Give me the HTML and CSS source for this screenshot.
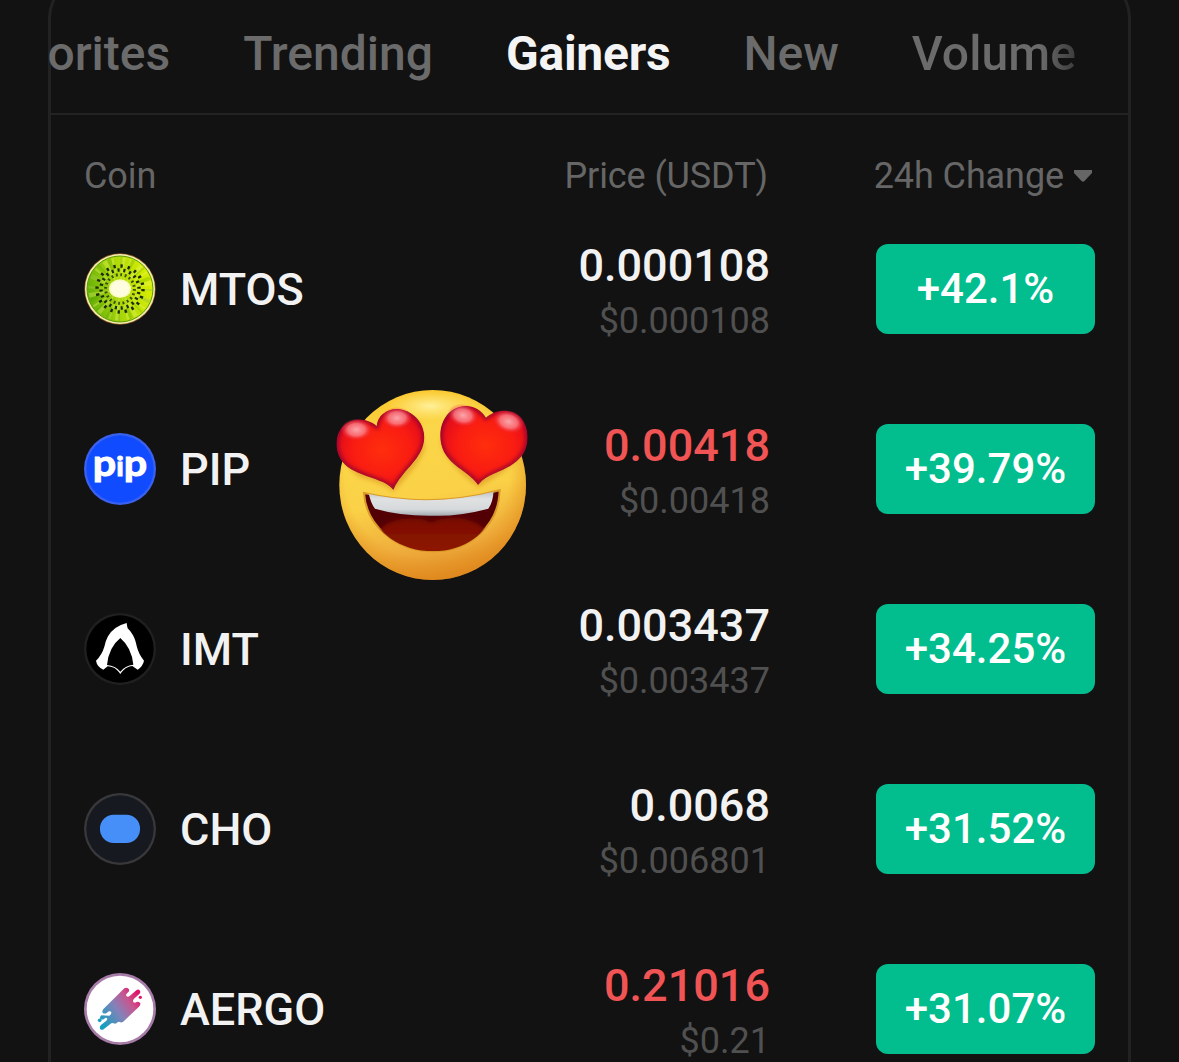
FILE: index.html
```
<!doctype html>
<html lang="en">
<head>
	<meta charset="utf-8">
	<meta name="viewport" content="width=device-width, initial-scale=1">
	<title>Gainers</title>
	<link rel="stylesheet" href="styles.css">
</head>
<body>

<div class="card">
	<nav class="tabs">
		<a class="tab">Favorites</a>
		<a class="tab">Trending</a>
		<a class="tab active">Gainers</a>
		<a class="tab">New</a>
		<a class="tab">Volume</a>
	</nav>

	<div class="row head">
		<div>Coin</div>
		<div class="head-price">Price (USDT)</div>
		<div class="head-change">24h Change
			<svg class="sort" viewBox="0 0 18 12"><path d="M0 0H18V3L10.500 11Q9 12.500 7.500 11L0 3Z"/></svg>
		</div>
	</div>

	<div class="row">
		<div class="coin">
			<svg class="icon" viewBox="42 39 216 216">
				<defs>
					<linearGradient id="kiwi" x1="0" y1=".6" x2="1" y2=".4">
						<stop offset="0" stop-color="#62ae08"/>
						<stop offset=".45" stop-color="#a8d60a"/>
						<stop offset="1" stop-color="#dcf000"/>
					</linearGradient>
					<radialGradient id="core">
						<stop offset=".75" stop-color="#fffde0"/>
						<stop offset="1" stop-color="#f3f8a8"/>
					</radialGradient>
				</defs>
				<circle cx="150" cy="147" r="107" fill="#8a5a22"/>
				<circle cx="150" cy="147" r="105" fill="#f4efb0"/>
				<circle cx="150" cy="147" r="99" fill="url(#kiwi)" stroke="#5f9a08" stroke-width="3"/>
				<g fill="none">
					<circle cx="150" cy="147" r="62" stroke="#e9f76a" stroke-opacity=".35" stroke-width="66" pathLength="170" stroke-dasharray="2 7 4 4"/>
					<circle cx="150" cy="147" r="78" stroke="#3f9300" stroke-opacity=".22" stroke-width="36" pathLength="200" stroke-dasharray="2 9 4 10"/>
					<g stroke="#1c2a05">
						<circle cx="150" cy="147" r="43" stroke-width="9" stroke-opacity=".8" pathLength="200" stroke-dasharray="4 6"/>
						<circle cx="150" cy="147" r="57" stroke-width="10" pathLength="200" stroke-dasharray="3.500 6.500" stroke-dashoffset="5"/>
						<circle cx="150" cy="147" r="69" stroke-width="10" pathLength="200" stroke-dasharray="3.200 6.800"/>
					</g>
				</g>
				<ellipse cx="150" cy="146" rx="33" ry="28" fill="url(#core)"/>
			</svg>
			<span>MTOS</span>
		</div>
		<div class="price">
			<div class="last">0.000108</div>
			<div class="fiat">$0.000108</div>
		</div>
		<div class="change">+42.1%</div>
	</div>

	<div class="row">
		<div class="coin">
			<svg class="icon" viewBox="42 39 216 216">
				<circle cx="150" cy="147" r="108" fill="#3a60ee"/>
				<circle cx="150" cy="147" r="101" fill="#104bff"/>
				<text class="pip" x="150" y="167" text-anchor="middle" textLength="163" lengthAdjust="spacingAndGlyphs">p<tspan class="pip-i">i</tspan>p</text>
			</svg>
			<span>PIP</span>
		</div>
		<div class="price">
			<div class="last down">0.00418</div>
			<div class="fiat">$0.00418</div>
		</div>
		<div class="change">+39.79%</div>
	</div>

	<div class="row">
		<div class="coin">
			<svg class="icon" viewBox="42 39 216 216">
				<circle cx="150" cy="147" r="108" fill="#202020"/>
				<circle cx="150" cy="147" r="101" fill="#000"/>
				<path fill="#fff" d="M170 69Q131 79 114 109Q106 124 103 140Q96 164 78 182Q81 200 100 209L113 199C130 200 141 207 151 222C161 207 172 200 187 198L203 209Q219 198 222 182Q206 163 200 138C196 115 186 98 173 85Q171 78 170 69ZM151 114Q185 143 190 194Q165 197 151 215Q136 197 111 195Q116 142 151 114Z"/>
			</svg>
			<span>IMT</span>
		</div>
		<div class="price">
			<div class="last">0.003437</div>
			<div class="fiat">$0.003437</div>
		</div>
		<div class="change">+34.25%</div>
	</div>

	<div class="row">
		<div class="coin">
			<svg class="icon" viewBox="42 39 216 216">
				<circle cx="150" cy="147" r="108" fill="#38383b"/>
				<circle cx="150" cy="147" r="101" fill="#171920"/>
				<rect x="90" y="104" width="120" height="85" rx="41" fill="#478ff8"/>
			</svg>
			<span>CHO</span>
		</div>
		<div class="price">
			<div class="last">0.0068</div>
			<div class="fiat">$0.006801</div>
		</div>
		<div class="change">+31.52%</div>
	</div>

	<div class="row">
		<div class="coin">
			<svg class="icon" viewBox="42 39 216 216">
				<defs>
					<linearGradient id="aergo" gradientUnits="userSpaceOnUse" x1="95" y1="190" x2="210" y2="110">
						<stop offset="0" stop-color="#159fc0"/>
						<stop offset=".45" stop-color="#8581b8"/>
						<stop offset=".75" stop-color="#c7568f"/>
						<stop offset="1" stop-color="#e0146c"/>
					</linearGradient>
				</defs>
				<circle cx="150" cy="147" r="108" fill="#a77ba8"/>
				<circle cx="150" cy="147" r="100" fill="#fff"/>
				<g fill="url(#aergo)">
					<path d="M163 85Q172 80 177 88Q179 94 172 99Q166 104 170 109Q174 112 179 108L199 91Q205 86 210 92Q213 98 207 103L192 116Q187 122 190 126Q194 130 200 126Q207 123 211 130Q212 136 206 141L163 182Q157 189 151 187Q147 183 143 187Q137 193 131 190Q126 187 121 192L101 208Q94 212 90 206Q88 200 93 195L109 182Q114 177 110 174Q107 172 103 176Q96 181 91 177Q88 171 94 166L118 167Q127 160 123 155Q118 152 111 158Q104 163 98 158Q95 153 101 146Z"/>
					<circle cx="89" cy="181" r="5.500"/>
					<circle cx="211" cy="112" r="5"/>
				</g>
			</svg>
			<span>AERGO</span>
		</div>
		<div class="price">
			<div class="last down">0.21016</div>
			<div class="fiat">$0.21</div>
		</div>
		<div class="change">+31.07%</div>
	</div>
</div>

<!-- heart eyes sticker, floats over the list -->
<svg class="sticker" viewBox="0 0 645 630">
	<defs>
		<linearGradient id="face" x1=".4" y1="0" x2=".6" y2="1">
			<stop offset="0" stop-color="#fbc72d"/>
			<stop offset=".2" stop-color="#fbd648"/>
			<stop offset=".55" stop-color="#fad147"/>
			<stop offset=".8" stop-color="#efad3c"/>
			<stop offset="1" stop-color="#e08a24"/>
		</linearGradient>
		<radialGradient id="edge" cx=".47" cy=".44" r=".58">
			<stop offset=".76" stop-color="#e58c14" stop-opacity="0"/>
			<stop offset="1" stop-color="#dc8418" stop-opacity=".65"/>
		</radialGradient>
		<radialGradient id="shine">
			<stop offset="0" stop-color="#fff09a"/>
			<stop offset="1" stop-color="#ffe878" stop-opacity="0"/>
		</radialGradient>
		<radialGradient id="heart" cx=".52" cy=".5" r=".66">
			<stop offset="0" stop-color="#ff2e0c"/>
			<stop offset=".5" stop-color="#f91c12"/>
			<stop offset=".8" stop-color="#e20c1c"/>
			<stop offset="1" stop-color="#8e0730"/>
		</radialGradient>
		<radialGradient id="gloss">
			<stop offset="0" stop-color="#fba6ab"/>
			<stop offset=".55" stop-color="#fa8088" stop-opacity=".8"/>
			<stop offset="1" stop-color="#f02030" stop-opacity="0"/>
		</radialGradient>
		<linearGradient id="teeth" x1="0" y1="0" x2="0" y2="1">
			<stop offset="0" stop-color="#b9bec0"/>
			<stop offset=".35" stop-color="#dfe1e2"/>
			<stop offset=".75" stop-color="#d6d9dc"/>
			<stop offset="1" stop-color="#a2a9b1"/>
		</linearGradient>
		<linearGradient id="tongue" x1="0" y1="0" x2="0" y2="1">
			<stop offset="0" stop-color="#7a0e04"/>
			<stop offset="1" stop-color="#941805"/>
		</linearGradient>
		<clipPath id="mouth"><path d="M117 339Q320 386 524 331C522 430 440 514 325 514C205 514 123 430 117 339Z"/></clipPath>
		<clipPath id="left"><use href="#heart-l"/></clipPath>
		<clipPath id="right"><use href="#heart-r"/></clipPath>
		<path id="heart-l" d="M205 330C182 299 125 295 78 268C40 245 30 205 36 174C44 132 84 110 122 121Q144 128 155 138C158 104 190 83 225 88C266 94 299 130 298 174C295 238 232 268 205 330Z"/>
		<path id="heart-r" d="M459 315C435 278 384 264 357 216C335 170 346 115 382 90C418 67 462 77 483 113C507 92 544 85 574 102C605 121 614 166 604 200C591 246 542 266 512 279C487 290 475 297 459 315Z"/>
		<filter id="soft" x="-20%" y="-20%" width="140%" height="140%"><feGaussianBlur stdDeviation="6"/></filter>
	</defs>
	<ellipse cx="323" cy="315" rx="280" ry="285" fill="url(#face)"/>
	<ellipse cx="323" cy="315" rx="280" ry="285" fill="url(#edge)"/>
	<ellipse cx="315" cy="78" rx="130" ry="46" fill="url(#shine)"/>
	<g fill="#c97810" opacity=".4" filter="url(#soft)">
		<path d="M204 336Q190 315 100 290L60 250L280 120L300 200Q292 245 204 336Z"/>
		<path d="M460 322Q360 250 345 180L590 200Q590 250 460 322Z"/>
	</g>
	<path d="M117 339Q320 386 524 331C522 430 440 514 325 514C205 514 123 430 117 339Z" fill="#520004" stroke="#d99a28" stroke-width="6"/>
	<g clip-path="url(#mouth)">
		<path d="M165 450Q185 422 240 416Q295 412 318 428Q345 412 405 415Q460 424 480 450L440 540H200Z" fill="url(#tongue)" filter="url(#soft)"/>
		<path d="M130 335Q320 386 506 330Q504 368 490 386Q400 410 320 407Q225 408 150 386Q137 370 130 335Z" fill="url(#teeth)"/>
	</g>
	<!-- dark rim is a blurred stroke kept inside each heart -->
	<g clip-path="url(#left)">
		<use href="#heart-l" fill="url(#heart)"/>
		<use href="#heart-l" fill="none" stroke="#8e0730" stroke-width="12" filter="url(#soft)"/>
	</g>
	<g clip-path="url(#right)">
		<use href="#heart-r" fill="url(#heart)"/>
		<use href="#heart-r" fill="none" stroke="#8e0730" stroke-width="12" filter="url(#soft)"/>
	</g>
	<g fill="url(#gloss)">
		<ellipse cx="94" cy="149" rx="48" ry="33"/>
		<ellipse cx="216" cy="114" rx="47" ry="33"/>
		<ellipse cx="414" cy="106" rx="47" ry="34" transform="rotate(12 414 106)"/>
		<ellipse cx="551" cy="125" rx="49" ry="34" transform="rotate(18 551 125)"/>
	</g>
</svg>

</body>
</html>
```
FILE: styles.css
```
html,body{
	margin: 0;
	padding: 0;
	height: 100%;
	background: #121212;
	color: #f2f2f2;
	font-family: Roboto, "Liberation Sans", sans-serif;
	overflow: hidden;
}
*{
	box-sizing: border-box;
}
body{
	position: relative;
	display: flow-root;
}
.card{
	width: 1083px;
	height: calc(100% + 24px);
	margin: -24px 0 0 48px;
	border: 3px solid #222;
	border-bottom: 0;
	border-radius: 42px 42px 0 0;
}

/* tabs run past the card edge and fade out on the right */
.tabs{
	display: flex;
	gap: 73px;
	margin: 0 -3px;
	padding-top: 21px;
	height: 136px;
	line-height: 107px;
	overflow: hidden;
	border-bottom: 2px solid #232323;
	justify-content: flex-end;
	padding-right: 55px;
}
.tab{
	color: #6b6b6b;
	font-size: 48px;
	font-weight: 500;
	white-space: nowrap;
}
.tab.active{
	color: #f4f4f4;
	font-weight: 700;
	letter-spacing: -.25px;
}
.tab:last-child{
	color: transparent;
	letter-spacing: .1px;
	background: linear-gradient(90deg, #6b6b6b 78%, #3c3c3c);
	-webkit-background-clip: text;
	background-clip: text;
}

.row{
	display: grid;
	grid-template-columns: 1fr auto 219px;
	column-gap: 106px;
	align-items: center;
	height: 180px;
	padding: 0 33px;
}
.head{
	height: 84px;
	padding-top: 38px;
	color: #666;
	font-size: 36px;
	line-height: 46px;
	letter-spacing: -.1px;
}
.head-price{
	padding-right: 2px;
}
.head-change{
	display: flex;
	align-items: center;
	justify-content: flex-end;
	gap: 10px;
	white-space: nowrap;
	padding-right: 3px;
}
.sort{
	flex: none;
	width: 18px;
	height: 12px;
	fill: #666;
}
.coin{
	display: flex;
	align-items: center;
	gap: 24px;
	font-size: 45px;
	font-weight: 500;
}
.icon{
	width: 72px;
	height: 72px;
}
.pip{
	fill: #fff;
	stroke: #fff;
	stroke-width: 3px;
	font-family: Lato, sans-serif;
	font-size: 108px;
	font-weight: 700;
}
.pip-i{
	font-size: 78px;
}
.price{
	padding-top: 9px;
	text-align: right;
	line-height: 55px;
}
.last{
	font-size: 45px;
	font-weight: 500;
}
.last.down{
	color: #f15454;
}
.fiat{
	color: #505050;
	font-size: 36px;
	line-height: 56px;
}
.change{
	height: 90px;
	border-radius: 12px;
	background: #02bd8d;
	color: #fff;
	font-size: 42px;
	font-weight: 500;
	line-height: 90px;
	text-align: center;
}
.sticker{
	position: absolute;
	left: 325px;
	top: 380px;
	width: 215px;
	height: 210px;
}
```
